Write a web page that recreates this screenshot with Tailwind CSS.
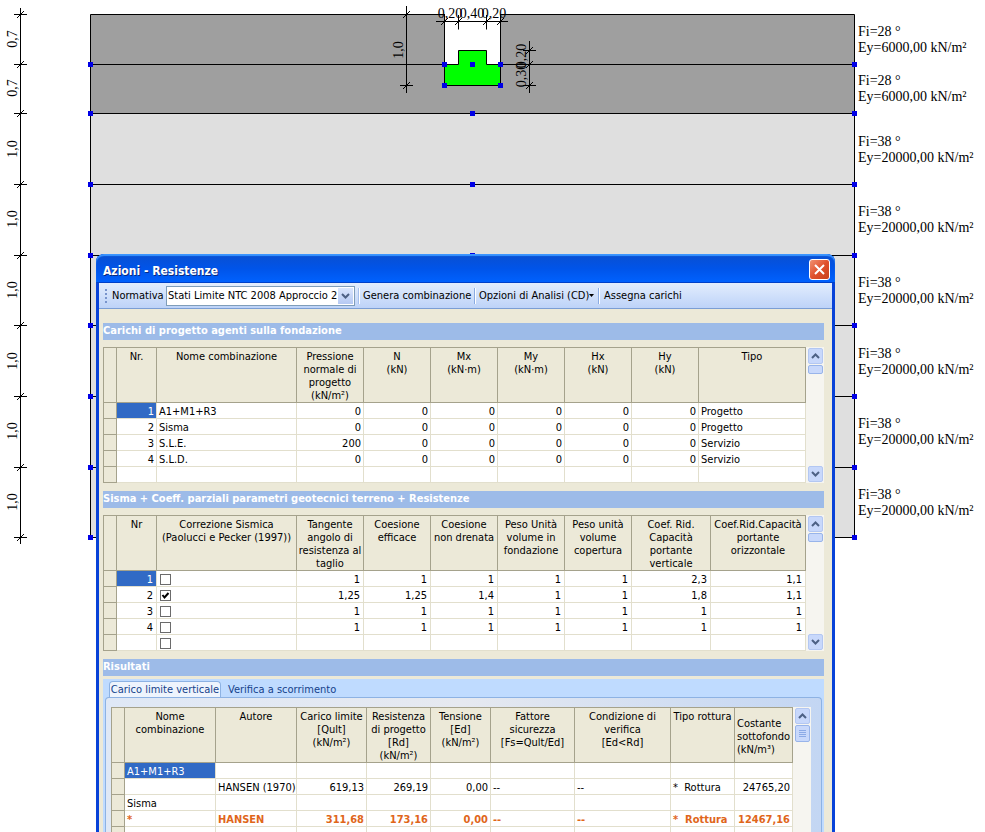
<!DOCTYPE html>
<html lang="it">
<head>
<meta charset="utf-8">
<meta name="viewport" content="width=device-width, initial-scale=1">
<title>Azioni - Resistenze</title>
<script src="https://cdn.jsdelivr.net/npm/@tailwindcss/browser@4"></script>
</head>
<body class="bg-white text-black">
<main class="relative h-screen overflow-hidden">

  <!-- Soil stratigraphy -->
  <svg width="985" height="560" viewBox="0 0 985 560" role="img" aria-label="Stratigrafia del terreno" class="block max-w-none">
    <defs>
      <g id="tick" stroke="#000"><path d="M-6.5 0H6.5M-3.5 3.5L3.5 -3.5"/></g>
      <g id="vtick" stroke="#000"><path d="M0 -6.5V8M-3.5 3.5L3.5 -3.5"/></g>
      <rect id="node" x="-2.500" y="-2.500" width="5" height="5" fill="#0000e6"/>
    </defs>
    <rect x="90.500" y="14.500" width="764" height="99" fill="#9f9f9f"/>
    <rect x="90.500" y="113.500" width="764" height="424" fill="#dfdfdf"/>
    <g stroke="#000" fill="none">
      <path d="M90.500 14.500H854.500V537.500H90.500Z"/>
      <path d="M90.500 64.500H854.500M90.500 113.500H854.500M90.500 184.500H854.500M90.500 255.500H854.500M90.500 325.500H854.500M90.500 396.500H854.500M90.500 467.500H854.500"/>
    </g>
    <!-- Excavation and footing -->
    <rect x="444" y="14" width="57" height="51" fill="#fff"/>
    <path d="M444.500 14V64.500M500.500 14V64.500" stroke="#000"/>
    <path d="M458.500 50.500H486.500V64.500H500.500V85.500H444.500V64.500H458.500Z" fill="#00ff00" stroke="#000"/>
    <!-- Dimension lines -->
    <g stroke="#000"><path d="M20.500 8V544M406.500 6V93M529.500 41V93M436 21.500H508"/></g>
    <use href="#tick" x="20.500" y="14.500"/><use href="#tick" x="20.500" y="64.500"/><use href="#tick" x="20.500" y="113.500"/>
    <use href="#tick" x="20.500" y="184.500"/><use href="#tick" x="20.500" y="255.500"/><use href="#tick" x="20.500" y="325.500"/>
    <use href="#tick" x="20.500" y="396.500"/><use href="#tick" x="20.500" y="467.500"/><use href="#tick" x="20.500" y="537.500"/>
    <use href="#tick" x="406.500" y="14.500"/><use href="#tick" x="406.500" y="85.500"/>
    <use href="#tick" x="529.500" y="50.500"/><use href="#tick" x="529.500" y="64.500"/><use href="#tick" x="529.500" y="85.500"/>
    <use href="#vtick" x="444.500" y="21.500"/><use href="#vtick" x="458.500" y="21.500"/><use href="#vtick" x="486.500" y="21.500"/><use href="#vtick" x="500.500" y="21.500"/>
    <!-- Nodes -->
    <use href="#node" x="444.500" y="64.500"/><use href="#node" x="472.500" y="64.500"/><use href="#node" x="500.500" y="64.500"/>
    <use href="#node" x="444.500" y="85.500"/><use href="#node" x="500.500" y="85.500"/>
    <use href="#node" x="90.500" y="64.500"/><use href="#node" x="854.500" y="64.500"/>
    <use href="#node" x="90.500" y="113.500"/><use href="#node" x="472.500" y="113.500"/><use href="#node" x="854.500" y="113.500"/>
    <use href="#node" x="90.500" y="184.500"/><use href="#node" x="472.500" y="184.500"/><use href="#node" x="854.500" y="184.500"/>
    <use href="#node" x="90.500" y="255.500"/><use href="#node" x="472.500" y="255.500"/><use href="#node" x="854.500" y="255.500"/>
    <use href="#node" x="90.500" y="325.500"/><use href="#node" x="854.500" y="325.500"/>
    <use href="#node" x="90.500" y="396.500"/><use href="#node" x="854.500" y="396.500"/>
    <use href="#node" x="90.500" y="467.500"/><use href="#node" x="854.500" y="467.500"/>
    <use href="#node" x="90.500" y="537.500"/><use href="#node" x="854.500" y="537.500"/>
    <!-- Dimension labels -->
    <g text-anchor="middle" class="text-[14px] font-['Liberation_Sans_Narrow','Liberation_Serif',serif]">
      <text transform="translate(17 39) rotate(-90)">0,7</text>
      <text transform="translate(17 88) rotate(-90)">0,7</text>
      <text transform="translate(17 149) rotate(-90)">1,0</text>
      <text transform="translate(17 219) rotate(-90)">1,0</text>
      <text transform="translate(17 290) rotate(-90)">1,0</text>
      <text transform="translate(17 361) rotate(-90)">1,0</text>
      <text transform="translate(17 431) rotate(-90)">1,0</text>
      <text transform="translate(17 502) rotate(-90)">1,0</text>
      <text transform="translate(403 50) rotate(-90)">1,0</text>
      <text transform="translate(526 56) rotate(-90)">0,20</text>
      <text transform="translate(526 75) rotate(-90)">0,30</text>
      <text x="450" y="18">0,20</text><text x="472" y="18">0,40</text><text x="494" y="18">0,20</text>
    </g>
    <!-- Soil parameters -->
    <g class="text-[14px] font-['Liberation_Serif',serif]">
      <text x="858" y="36">Fi=28 °</text><text x="858" y="52">Ey=6000,00 kN/m²</text>
      <text x="858" y="85">Fi=28 °</text><text x="858" y="101">Ey=6000,00 kN/m²</text>
      <text x="858" y="146">Fi=38 °</text><text x="858" y="162">Ey=20000,00 kN/m²</text>
      <text x="858" y="216">Fi=38 °</text><text x="858" y="232">Ey=20000,00 kN/m²</text>
      <text x="858" y="287">Fi=38 °</text><text x="858" y="303">Ey=20000,00 kN/m²</text>
      <text x="858" y="358">Fi=38 °</text><text x="858" y="374">Ey=20000,00 kN/m²</text>
      <text x="858" y="428">Fi=38 °</text><text x="858" y="444">Ey=20000,00 kN/m²</text>
      <text x="858" y="499">Fi=38 °</text><text x="858" y="515">Ey=20000,00 kN/m²</text>
    </g>
  </svg>

  <!-- Shared glyphs -->
  <svg width="0" height="0" class="absolute" aria-hidden="true">
    <symbol id="up" viewBox="0 0 9 6"><path d="M1 5L4.500 1.500L8 5" fill="none" stroke="#4d6185" stroke-width="2"/></symbol>
    <symbol id="down" viewBox="0 0 9 6"><path d="M1 1L4.500 4.500L8 1" fill="none" stroke="#4d6185" stroke-width="2"/></symbol>
  </svg>

  <!-- Dialog -->
  <section role="dialog" aria-labelledby="dlg-title" class="absolute left-24 top-[254px] w-[739px] rounded-t-lg bg-[#0842d8] text-[11px] leading-[13px] font-['DejaVu_Sans_Condensed','DejaVu_Sans',sans-serif]">
    <header class="flex h-[29px] items-center justify-between rounded-t-lg bg-linear-to-b from-[#0a4fd0] via-[#0054e9] to-[#0062ff] pl-[7px] pr-[5px] shadow-[inset_0_2px_1px_#3b95ff,inset_0_-1px_0_#0040c8]">
      <h1 id="dlg-title" class="pt-1 text-[12px] leading-4 font-bold text-white [text-shadow:1px_1px_0_#0b2a7d]">Azioni - Resistenze</h1>
      <button type="button" aria-label="Chiudi" class="mt-0.5 flex size-[21px] items-center justify-center rounded-[3px] border border-white bg-linear-to-br from-[#f09070] via-[#e0512c] to-[#c8401c]">
        <svg width="11" height="11" viewBox="0 0 11 11"><path d="M1 1L10 10M10 1L1 10" stroke="#fff" stroke-width="2"/></svg>
      </button>
    </header>

    <div class="mx-[3px] bg-[#ece9d8]">
      <!-- Toolbar -->
      <div role="toolbar" aria-label="Strumenti" class="flex h-[26px] items-center border-b border-[#7b9ed4] bg-linear-to-b from-[#e3edfd] to-[#bdd3f8] pl-1.5">
        <span class="flex flex-col gap-0.5" aria-hidden="true"><i class="size-0.5 bg-[#7894cc]"></i><i class="size-0.5 bg-[#7894cc]"></i><i class="size-0.5 bg-[#7894cc]"></i><i class="size-0.5 bg-[#7894cc]"></i></span>
        <label for="norm" class="ml-[5px] w-[54px] whitespace-nowrap">Normativa</label>
        <span class="relative flex h-5 w-[189px] items-center border border-[#7f9db9] bg-white">
          <select id="norm" class="h-full w-full appearance-none bg-white pl-px pr-4 outline-none"><option>Stati Limite NTC 2008 Approccio 2</option></select>
          <span class="pointer-events-none absolute inset-y-px right-px flex w-[15px] items-center justify-center bg-linear-to-b from-[#dbe6fd] to-[#b5c9f3]"><svg width="9" height="6"><use href="#down"/></svg></span>
        </span>
        <span class="ml-[3px] h-4 w-0.5 border-l border-[#a5bfec] bg-white"></span>
        <button type="button" class="ml-[3px] w-[107px] text-left whitespace-nowrap">Genera combinazione</button>
        <span class="ml-1 h-4 w-0.5 border-l border-[#8aabe2] bg-white"></span>
        <button type="button" class="ml-[3px] flex w-[115px] items-center justify-between whitespace-nowrap">Opzioni di Analisi (CD)<svg width="5" height="3"><path d="M0 0H5L2.500 3Z"/></svg></button>
        <span class="ml-1 h-4 w-0.5 border-l border-[#8aabe2] bg-white"></span>
        <button type="button" class="ml-1 whitespace-nowrap">Assegna carichi</button>
      </div>

      <div class="flex flex-col pl-1 pr-2 pt-3.5">
        <h2 class="h-[17px] bg-[#9dbbe8] leading-[15px] font-bold text-white">Carichi di progetto agenti sulla fondazione</h2>
        <div class="mt-[7px] mb-2 flex h-[136px] bg-white">
          <table class="w-[703px] table-fixed border-separate border-spacing-0 border-t border-l border-[#a5a28c] [&_th]:h-[55px] [&_th]:border-r [&_th]:border-b [&_th]:border-[#a5a28c] [&_th]:bg-[#ece9d8] [&_th]:pt-0.5 [&_th]:align-top [&_th]:font-normal [&_th]:whitespace-nowrap [&_tbody_th]:h-4 [&_tbody_th]:pt-0 [&_td]:h-4 [&_td]:border-r [&_td]:border-b [&_td]:border-[#e2dfcd] [&_td]:px-0.5 [&_td]:pt-0.5 [&_td]:text-right [&_td]:whitespace-nowrap [&_td:nth-child(3)]:text-left [&_td:last-child]:text-left">
            <colgroup><col class="w-[13px]"><col class="w-[40px]"><col class="w-[140px]"><col class="w-[67px]"><col class="w-[67px]"><col class="w-[67px]"><col class="w-[67px]"><col class="w-[67px]"><col class="w-[67px]"><col></colgroup>
            <thead><tr><th></th><th>Nr.</th><th>Nome combinazione</th><th>Pressione<br>normale di<br>progetto<br>(kN/m²)</th><th>N<br>(kN)</th><th>Mx<br>(kN·m)</th><th>My<br>(kN·m)</th><th>Hx<br>(kN)</th><th>Hy<br>(kN)</th><th>Tipo</th></tr></thead>
            <tbody>
              <tr><th></th><td class="bg-[#316ac5] text-white">1</td><td>A1+M1+R3</td><td>0</td><td>0</td><td>0</td><td>0</td><td>0</td><td>0</td><td>Progetto</td></tr>
              <tr><th></th><td>2</td><td>Sisma</td><td>0</td><td>0</td><td>0</td><td>0</td><td>0</td><td>0</td><td>Progetto</td></tr>
              <tr><th></th><td>3</td><td>S.L.E.</td><td>200</td><td>0</td><td>0</td><td>0</td><td>0</td><td>0</td><td>Servizio</td></tr>
              <tr><th></th><td>4</td><td>S.L.D.</td><td>0</td><td>0</td><td>0</td><td>0</td><td>0</td><td>0</td><td>Servizio</td></tr>
              <tr><th></th><td></td><td></td><td></td><td></td><td></td><td></td><td></td><td></td><td></td></tr>
            </tbody>
          </table>
          <div class="flex w-[18px] flex-col items-center bg-[#f6f5f0] py-px">
            <button type="button" aria-label="Su" class="flex h-4 w-[15px] items-center justify-center rounded-xs border border-[#b3c7f2] bg-[#c8d8fb]"><svg width="9" height="6"><use href="#up"/></svg></button>
            <div class="mt-px h-[9px] w-[15px] rounded-xs border border-[#98b4ea] bg-[#c8d8fb]"></div>
            <button type="button" aria-label="Giù" class="mt-auto flex h-4 w-[15px] items-center justify-center rounded-xs border border-[#b3c7f2] bg-[#c8d8fb]"><svg width="9" height="6"><use href="#down"/></svg></button>
          </div>
        </div>

        <h2 class="h-[17px] bg-[#9dbbe8] leading-[15px] font-bold text-white">Sisma + Coeff. parziali parametri geotecnici terreno + Resistenze</h2>
        <div class="mt-[7px] mb-2 flex h-[136px] bg-white">
          <table class="w-[703px] table-fixed border-separate border-spacing-0 border-t border-l border-[#a5a28c] [&_th]:h-[55px] [&_th]:border-r [&_th]:border-b [&_th]:border-[#a5a28c] [&_th]:bg-[#ece9d8] [&_th]:pt-0.5 [&_th]:align-top [&_th]:font-normal [&_th]:whitespace-nowrap [&_tbody_th]:h-4 [&_tbody_th]:pt-0 [&_td]:h-4 [&_td]:border-r [&_td]:border-b [&_td]:border-[#e2dfcd] [&_td]:px-[3px] [&_td]:pt-0.5 [&_td]:text-right [&_td]:whitespace-nowrap [&_label]:relative [&_label]:flex [&_input]:size-[11px] [&_input]:appearance-none [&_input]:border [&_input]:border-[#6b6b6b] [&_input]:bg-white">
            <colgroup><col class="w-[13px]"><col class="w-[40px]"><col class="w-[140px]"><col class="w-[67px]"><col class="w-[67px]"><col class="w-[67px]"><col class="w-[67px]"><col class="w-[67px]"><col class="w-[79px]"><col></colgroup>
            <thead><tr><th></th><th>Nr</th><th>Correzione Sismica<br>(Paolucci e Pecker (1997))</th><th>Tangente<br>angolo di<br>resistenza al<br>taglio</th><th>Coesione<br>efficace</th><th>Coesione<br>non drenata</th><th>Peso Unità<br>volume in<br>fondazione</th><th>Peso unità<br>volume<br>copertura</th><th>Coef. Rid.<br>Capacità<br>portante<br>verticale</th><th>Coef.Rid.Capacità<br>portante<br>orizzontale</th></tr></thead>
            <tbody>
              <tr><th></th><td class="bg-[#316ac5] text-white">1</td><td><label><input type="checkbox" aria-label="Correzione sismica 1"></label></td><td>1</td><td>1</td><td>1</td><td>1</td><td>1</td><td>2,3</td><td>1,1</td></tr>
              <tr><th></th><td>2</td><td><label><input type="checkbox" checked aria-label="Correzione sismica 2"><svg width="11" height="11" viewBox="0 0 11 11" class="pointer-events-none absolute top-0 left-0"><path d="M2.500 5L4.500 7.500L8.500 3" fill="none" stroke="#000" stroke-width="2"/></svg></label></td><td>1,25</td><td>1,25</td><td>1,4</td><td>1</td><td>1</td><td>1,8</td><td>1,1</td></tr>
              <tr><th></th><td>3</td><td><label><input type="checkbox" aria-label="Correzione sismica 3"></label></td><td>1</td><td>1</td><td>1</td><td>1</td><td>1</td><td>1</td><td>1</td></tr>
              <tr><th></th><td>4</td><td><label><input type="checkbox" aria-label="Correzione sismica 4"></label></td><td>1</td><td>1</td><td>1</td><td>1</td><td>1</td><td>1</td><td>1</td></tr>
              <tr><th></th><td></td><td><label><input type="checkbox" aria-label="Correzione sismica, nuova riga"></label></td><td></td><td></td><td></td><td></td><td></td><td></td><td></td></tr>
            </tbody>
          </table>
          <div class="flex w-[18px] flex-col items-center bg-[#f6f5f0] py-px">
            <button type="button" aria-label="Su" class="flex h-4 w-[15px] items-center justify-center rounded-xs border border-[#b3c7f2] bg-[#c8d8fb]"><svg width="9" height="6"><use href="#up"/></svg></button>
            <div class="mt-px h-[9px] w-[15px] rounded-xs border border-[#98b4ea] bg-[#c8d8fb]"></div>
            <button type="button" aria-label="Giù" class="mt-auto flex h-4 w-[15px] items-center justify-center rounded-xs border border-[#b3c7f2] bg-[#c8d8fb]"><svg width="9" height="6"><use href="#down"/></svg></button>
          </div>
        </div>

        <h2 class="h-[17px] bg-[#9dbbe8] leading-[15px] font-bold text-white">Risultati</h2>
        <div class="mt-[3px] bg-[#bfdbff] px-0.5 pt-0.5">
          <div role="tablist" class="flex pl-1 text-[#15428b]">
            <button role="tab" type="button" aria-selected="true" class="h-4 w-[112px] rounded-t-sm border border-b-0 border-[#8db2e3] bg-[#eef4fd] whitespace-nowrap">Carico limite verticale</button>
            <button role="tab" type="button" aria-selected="false" class="h-4 px-[7px] whitespace-nowrap">Verifica a scorrimento</button>
          </div>
          <div role="tabpanel" aria-label="Carico limite verticale" class="rounded-t border border-b-0 border-[#8db2e3] bg-linear-to-r from-[#dfe8f6] via-[#e6e9f0] to-[#c3d6f3] px-[5px] pt-[9px]">
            <div class="flex w-[700px] bg-white">
              <table class="w-[682px] table-fixed border-separate border-spacing-0 border-t border-l border-[#a5a28c] [&_th]:h-[55px] [&_th]:border-r [&_th]:border-b [&_th]:border-[#a5a28c] [&_th]:bg-[#ece9d8] [&_th]:pt-0.5 [&_th]:align-top [&_th]:font-normal [&_th]:whitespace-nowrap [&_tbody_th]:h-4 [&_tbody_th]:pt-0 [&_td]:h-4 [&_td]:border-r [&_td]:border-b [&_td]:border-[#e2dfcd] [&_td]:px-0.5 [&_td]:pt-0.5 [&_td]:text-right [&_td]:whitespace-nowrap [&_td:nth-child(2)]:text-left [&_td:nth-child(3)]:text-left [&_td:nth-child(7)]:text-left [&_td:nth-child(8)]:text-left [&_td:nth-child(9)]:text-left">
                <colgroup><col class="w-[13px]"><col class="w-[91px]"><col class="w-[81px]"><col class="w-[70px]"><col class="w-[64px]"><col class="w-[60px]"><col class="w-[84px]"><col class="w-[96px]"><col class="w-[64px]"><col></colgroup>
                <thead><tr><th></th><th>Nome<br>combinazione</th><th>Autore</th><th>Carico limite<br>[Qult]<br>(kN/m²)</th><th>Resistenza<br>di progetto<br>[Rd]<br>(kN/m²)</th><th>Tensione<br>[Ed]<br>(kN/m²)</th><th>Fattore<br>sicurezza<br>[Fs=Qult/Ed]</th><th>Condizione di<br>verifica<br>[Ed&lt;Rd]</th><th>Tipo rottura</th><th><span class="block pl-0.5 pt-[7px] text-left">Costante<br>sottofondo<br>(kN/m³)</span></th></tr></thead>
                <tbody>
                  <tr><th></th><td class="bg-[#316ac5] text-white">A1+M1+R3</td><td></td><td></td><td></td><td></td><td></td><td></td><td></td><td></td></tr>
                  <tr><th></th><td></td><td>HANSEN (1970)</td><td>619,13</td><td>269,19</td><td>0,00</td><td>--</td><td>--</td><td>*&nbsp; Rottura</td><td>24765,20</td></tr>
                  <tr><th></th><td>Sisma</td><td></td><td></td><td></td><td></td><td></td><td></td><td></td><td></td></tr>
                  <tr class="font-bold text-[#e0661a]"><th></th><td>*</td><td>HANSEN</td><td>311,68</td><td>173,16</td><td>0,00</td><td>--</td><td>--</td><td>*&nbsp; Rottura</td><td>12467,16</td></tr>
                  <tr><th></th><td></td><td></td><td></td><td></td><td></td><td></td><td></td><td></td><td></td></tr>
                </tbody>
              </table>
              <div class="flex w-[18px] flex-col items-center bg-[#f6f5f0] py-px">
                <button type="button" aria-label="Su" class="flex h-4 w-[15px] items-center justify-center rounded-xs border border-[#b3c7f2] bg-[#c8d8fb]"><svg width="9" height="6"><use href="#up"/></svg></button>
                <div class="mt-px flex h-[17px] w-[15px] flex-col items-center justify-center gap-px rounded-xs border border-[#98b4ea] bg-[#c8d8fb]"><i class="h-px w-[7px] bg-[#8caae6]"></i><i class="h-px w-[7px] bg-[#8caae6]"></i><i class="h-px w-[7px] bg-[#8caae6]"></i><i class="h-px w-[7px] bg-[#8caae6]"></i></div>
              </div>
            </div>
          </div>
        </div>
      </div>
    </div>
  </section>
</main>
</body>
</html>
